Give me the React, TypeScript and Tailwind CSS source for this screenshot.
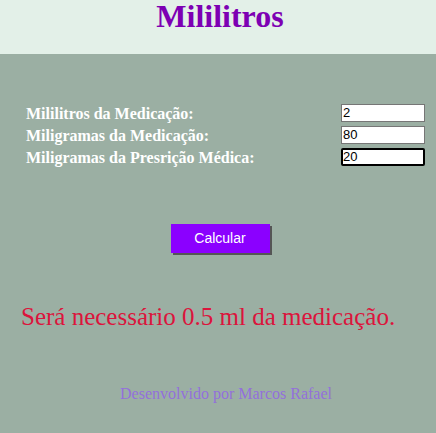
import React from 'react';

const fields = [
  { label: 'Mililitros da Medicação:', value: '2' },
  { label: 'Miligramas da Medicação:', value: '80' },
  { label: 'Miligramas da Presrição Médica:', value: '20', focus: true },
];

export default function App() {
  return (
    <div className="w-[436px] h-[433px] bg-[#9bafa3] flex flex-col font-['Liberation_Serif',serif]">
      <header className="h-[54px] bg-[#e3f0e8] flex justify-center items-start pt-[1px]">
        <h1 className="font-['Liberation_Serif',serif] text-[32px] font-bold text-[#7d00b3] leading-[30px] ml-[4px]">
          Mililitros
        </h1>
      </header>

      <div className="flex flex-col gap-[4px] pl-[26px] pr-[11px] pt-[50px]">
        {fields.map((f) => (
          <div key={f.label} className="flex items-center justify-between h-[18px]">
            <span className="text-white font-bold text-[16px] leading-none mt-[2px]">{f.label}</span>
            <input
              readOnly
              value={f.value}
              className={
                f.focus
                  ? "w-[84px] h-[18px] bg-white border-2 border-black rounded-[2px] text-[13px] text-black outline-none font-['Liberation_Sans',sans-serif]"
                  : "w-[84px] h-[18px] bg-white border border-[#767676] px-[1px] text-[13px] text-black outline-none font-['Liberation_Sans',sans-serif]"
              }
            />
          </div>
        ))}
      </div>

      <div className="flex justify-center mt-[58px] pl-[4px]">
        <button className="w-[99px] h-[29px] bg-[#8b00ff] text-white text-[14px] shadow-[2px_2px_0_#555] font-['Liberation_Sans',sans-serif]">
          Calcular
        </button>
      </div>

      <p className="text-[#dc143c] text-[25px] leading-none pl-[21px] mt-[51px]">
        Será necessário 0.5 ml da medicação.
      </p>

      <p className="text-[#9370db] text-[16px] leading-none text-center pl-[16px] mt-[57px]">
        Desenvolvido por Marcos Rafael
      </p>
    </div>
  );
}
